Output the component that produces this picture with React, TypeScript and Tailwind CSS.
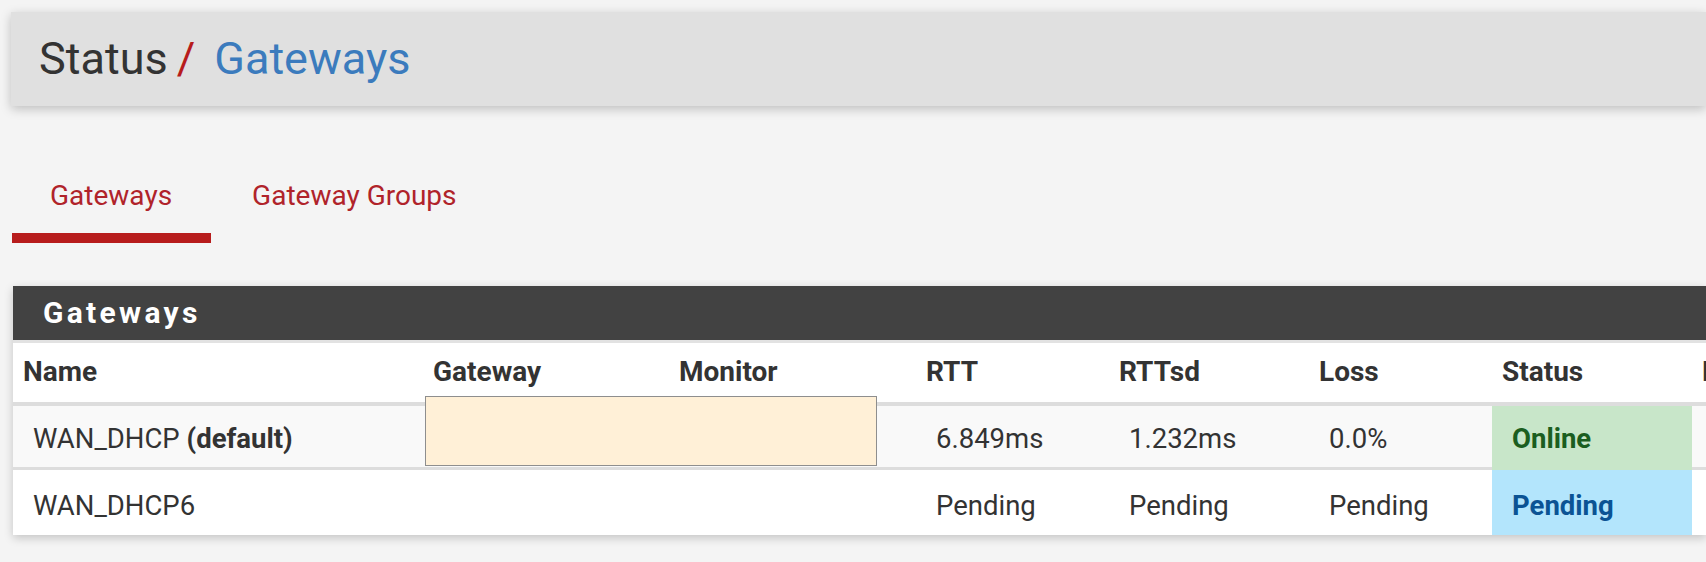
import React from 'react'

interface Gateway {
  name: string
  isDefault?: boolean
  rtt: string
  rttsd: string
  loss: string
  status: 'Online' | 'Pending'
}

const gateways: Gateway[] = [
  { name: 'WAN_DHCP', isDefault: true, rtt: '6.849ms', rttsd: '1.232ms', loss: '0.0%', status: 'Online' },
  { name: 'WAN_DHCP6', rtt: 'Pending', rttsd: 'Pending', loss: 'Pending', status: 'Pending' },
]

const columns = ['Name', 'Gateway', 'Monitor', 'RTT', 'RTTsd', 'Loss', 'Status', 'Description']

const grid = 'grid grid-cols-[410px_246px_247px_193px_200px_183px_200px_1fr]'

function GatewayRow({ gw, first }: { gw: Gateway; first: boolean }) {
  // first row carries the separator line under its cells, the status cell paints over it
  const cell = first
    ? 'pl-[20px] pt-[17px] border-b-[3px] border-[#dddddd] whitespace-nowrap'
    : 'pl-[20px] pt-[20px] whitespace-nowrap'
  const statusColor =
    gw.status === 'Online' ? 'bg-[#c8e6c9] text-[#1b5e20]' : 'bg-[#b3e5fc] text-[#0b5394]'

  return (
    <div className={`${grid} text-[27.5px] leading-[32px] ${first ? 'h-[64px] bg-[#f9f9f9]' : 'h-[65px] bg-white'}`}>
      <div className={cell}>
        {gw.name}
        {gw.isDefault && <span className="font-bold"> (default)</span>}
      </div>
      <div className={cell} />
      <div className={cell} />
      <div className={cell}>{gw.rtt}</div>
      <div className={cell}>{gw.rttsd}</div>
      <div className={cell}>{gw.loss}</div>
      <div className={`pl-[20px] font-bold ${first ? 'pt-[17px]' : 'pt-[20px]'} ${statusColor}`}>{gw.status}</div>
      <div className={cell} />
    </div>
  )
}

export default function App() {
  return (
    <div className="w-full h-[562px] overflow-hidden bg-[#f4f4f4] font-['Roboto',sans-serif] text-[#333]">
      {/* Page header */}
      <div className="ml-[11px] mt-[12px] h-[94px] flex items-center pl-[28px] bg-[#e0e0e0] shadow-[0_3px_10px_rgba(0,0,0,0.22)]">
        <h1 className="flex items-center text-[45px] leading-[52px]">
          <span className="text-[#333]">Status</span>
          <span className="ml-[9px] text-[#b71c1c]">/</span>
          <span className="ml-[19px] text-[#3b7bbd]">Gateways</span>
        </h1>
      </div>

      {/* Tabs */}
      <div className="mt-[74px] ml-[12px] flex text-[28px] leading-[32px] text-[#b0232a]">
        <div className="pl-[38px] pr-[39px] pb-[21px] border-b-[10px] border-[#b71c1c]">Gateways</div>
        <div className="pl-[41px] pr-[39px] pb-[21px]">Gateway Groups</div>
      </div>

      {/* Panel */}
      <div className="relative mt-[43px] ml-[13px] bg-white shadow-[0_3px_9px_rgba(0,0,0,0.2)]">
        <div className="h-[54px] pl-[30px] bg-[#424242] text-white font-bold text-[30px] leading-[54px] tracking-[3.3px]">
          Gateways
        </div>
        <div className="h-[3px] bg-[#e2e2e2]" />

        <div className={`${grid} h-[63px] border-b-4 border-[#dddddd] bg-white font-bold text-[28px] leading-[32px]`}>
          {columns.map((c) => (
            <div key={c} className="pl-[10px] pt-[13px] whitespace-nowrap">
              {c}
            </div>
          ))}
        </div>

        {gateways.map((gw, i) => (
          <GatewayRow key={gw.name} gw={gw} first={i === 0} />
        ))}

        {/* redacted gateway / monitor addresses */}
        <div className="absolute left-[412px] top-[110px] w-[452px] h-[70px] bg-[#fff0d7] border border-[#8e8e8e]" />
      </div>
    </div>
  )
}
